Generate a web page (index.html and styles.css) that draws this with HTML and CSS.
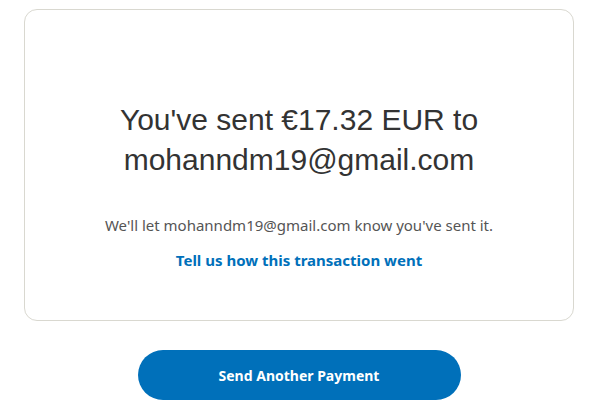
FILE: index.html
```html
<!DOCTYPE html>
<html lang="en">
<head>
<meta charset="utf-8">
<title>Payment sent</title>
<link rel="stylesheet" href="styles.css">
</head>
<body>
<main class="page">
  <section class="card">
    <h1 class="title">You've sent €17.32 EUR to mohanndm19@gmail.com</h1>
    <p class="note">We'll let mohanndm19@gmail.com know you've sent it.</p>
    <a class="feedback" href="#">Tell us how this transaction went</a>
  </section>
  <div class="actions">
    <a class="btn-primary" href="#">Send Another Payment</a>
  </div>
</main>
</body>
</html>
```
FILE: styles.css
```css
html, body {
  margin: 0;
  padding: 0;
  background: #ffffff;
}

.page {
  padding: 9px 21px 0 24px;
  font-family: "Noto Sans", "DejaVu Sans", sans-serif;
}

.card {
  box-sizing: border-box;
  height: 312px;
  border: 1px solid #d9d8d0;
  border-radius: 13px;
  display: flex;
  flex-direction: column;
  align-items: center;
  padding: 90px 60px 0;
  text-align: center;
}

.title {
  margin: 0;
  width: 400px;
  font-family: "Liberation Sans", Arial, sans-serif;
  font-weight: 400;
  font-size: 30px;
  line-height: 40px;
  color: #333333;
}

.note {
  margin: 35px 0 0;
  font-size: 15px;
  line-height: 20px;
  color: #555555;
}

.feedback {
  margin-top: 15px;
  font-size: 15px;
  line-height: 20px;
  font-weight: 700;
  color: #0070ba;
  text-decoration: none;
}

.actions {
  display: flex;
  justify-content: center;
  padding-top: 29px;
}

.btn-primary {
  box-sizing: border-box;
  width: 323px;
  height: 50px;
  border-radius: 25px;
  background: #0070ba;
  color: #ffffff;
  font-size: 14px;
  font-weight: 700;
  display: flex;
  align-items: center;
  justify-content: center;
  text-decoration: none;
}
```
